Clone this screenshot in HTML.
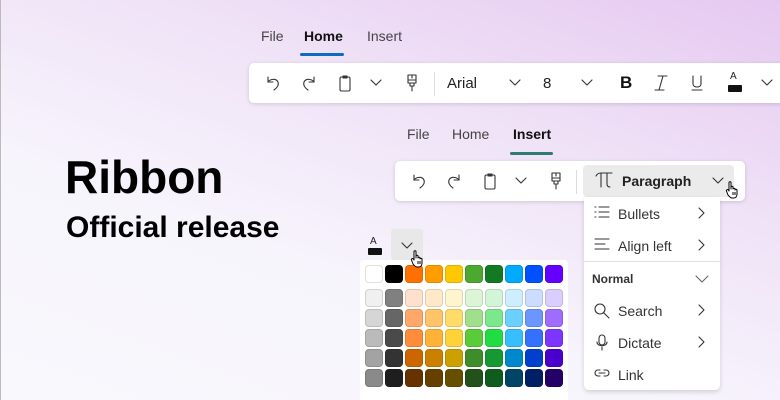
<!DOCTYPE html>
<html><head><meta charset="utf-8"><style>
*{margin:0;padding:0;box-sizing:border-box}
body{width:780px;height:400px;overflow:hidden;font-family:"Liberation Sans",sans-serif;position:relative;
background:linear-gradient(200deg,#e6c9f1 0%,#f0e3f7 35%,#f7f5fc 65%,#f8f8fd 100%);border-left:1px solid #bbb}
.a{position:absolute}
.tab{position:absolute;font-size:14px;color:#444}
.bar{position:absolute;background:#fff;border-radius:5px;box-shadow:0 1px 4px rgba(0,0,0,.15)}
svg{position:absolute;overflow:visible}
.ic{fill:none;stroke:#333;stroke-width:1.1;stroke-linecap:round;stroke-linejoin:round}
.sw{position:absolute;width:18px;height:18px;border-radius:4px;border:1px solid rgba(0,0,0,.12)}
.mi{position:absolute;left:34px;font-size:14px;color:#333}
.cur{fill:#fff;stroke:#000;stroke-width:1;stroke-linejoin:round}
</style></head><body>
<div class="a" style="left:64px;top:150px;font-size:46px;font-weight:bold;color:#000">Ribbon</div>
<div class="a" style="left:65px;top:211px;font-size:30px;font-weight:bold;color:#000">Official release</div>

<div class="tab" style="left:260px;top:28px">File</div>
<div class="tab" style="left:303px;top:28px;font-weight:bold;color:#111">Home</div>
<div class="tab" style="left:366px;top:28px">Insert</div>
<div class="a" style="left:299px;top:53px;width:44px;height:3px;border-radius:2px;background:#0f6cbd"></div>

<div class="bar" style="left:248px;top:63px;width:560px;height:40px">
<svg class="ic" style="left:15px;top:11px" width="18" height="18" viewBox="0 0 18 18"><path d="M4 3v5h5"/><path d="M4 8c2-3 8-4 10 0 1 3-1 6-4 8"/></svg>
<svg class="ic" style="left:51px;top:11px" width="18" height="18" viewBox="0 0 18 18"><path d="M14 3v5H9"/><path d="M14 8c-2-3-8-4-10 0-1 3 1 6 4 8"/></svg>
<svg class="ic" style="left:89px;top:11px" width="14" height="18" viewBox="0 0 14 18"><rect x="2" y="3" width="10" height="14" rx="1.5"/><path d="M5 2h4v2H5z"/></svg>
<svg class="ic" style="left:121px;top:16px" width="12" height="8" viewBox="0 0 12 8"><path d="M1 1l5 5 5-5"/></svg>
<svg class="ic" style="left:157px;top:10px" width="12" height="20" viewBox="0 0 12 20"><path d="M2 2h8v8H2zM2 7h8M6 2v3M4 10v3h4v-3M6 13v5"/></svg>
<div class="a" style="left:185px;top:9px;width:1px;height:24px;background:#ddd"></div>
<div class="a" style="left:198px;top:12px;font-size:15px;color:#222">Arial</div>
<svg class="ic" style="left:260px;top:16px" width="12" height="8" viewBox="0 0 12 8"><path d="M1 1l5 5 5-5"/></svg>
<div class="a" style="left:294px;top:12px;font-size:15px;color:#222">8</div>
<svg class="ic" style="left:332px;top:16px" width="12" height="8" viewBox="0 0 12 8"><path d="M1 1l5 5 5-5"/></svg>
<div class="a" style="left:371px;top:10px;font-size:17px;font-weight:bold;color:#111">B</div>
<svg class="ic" style="left:405px;top:12px" width="14" height="16" viewBox="0 0 14 16"><path d="M4 1h9M1 15h9M9 1L5 15"/></svg>
<svg class="ic" style="left:443px;top:12px" width="10" height="16" viewBox="0 0 10 16"><path d="M1 1v8c0 4 8 4 8 0V1M0 15h10"/></svg>
<div class="a" style="left:481px;top:8px;font-size:10px;color:#222">A</div>
<div class="a" style="left:479px;top:22px;width:14px;height:7px;background:#111;border-radius:1px"></div>
<svg class="ic" style="left:512px;top:16px" width="12" height="8" viewBox="0 0 12 8"><path d="M1 1l5 5 5-5"/></svg>
</div>

<div class="tab" style="left:406px;top:126px">File</div>
<div class="tab" style="left:451px;top:126px">Home</div>
<div class="tab" style="left:512px;top:126px;font-weight:bold;color:#111">Insert</div>
<div class="a" style="left:509px;top:152px;width:43px;height:3px;border-radius:2px;background:#2e7d6f"></div>

<div class="bar" style="left:394px;top:161px;width:350px;height:40px">
<svg class="ic" style="left:15px;top:11px" width="18" height="18" viewBox="0 0 18 18"><path d="M4 3v5h5"/><path d="M4 8c2-3 8-4 10 0 1 3-1 6-4 8"/></svg>
<svg class="ic" style="left:50px;top:11px" width="18" height="18" viewBox="0 0 18 18"><path d="M14 3v5H9"/><path d="M14 8c-2-3-8-4-10 0-1 3 1 6 4 8"/></svg>
<svg class="ic" style="left:88px;top:11px" width="14" height="18" viewBox="0 0 14 18"><rect x="2" y="3" width="10" height="14" rx="1.5"/><path d="M5 2h4v2H5z"/></svg>
<svg class="ic" style="left:120px;top:16px" width="12" height="8" viewBox="0 0 12 8"><path d="M1 1l5 5 5-5"/></svg>
<svg class="ic" style="left:155px;top:10px" width="12" height="20" viewBox="0 0 12 20"><path d="M2 2h8v8H2zM2 7h8M6 2v3M4 10v3h4v-3M6 13v5"/></svg>
<div class="a" style="left:181px;top:9px;width:1px;height:24px;background:#ddd"></div>
<div class="a" style="left:188px;top:4px;width:151px;height:32px;background:#ebebeb;border-radius:4px">
<svg class="ic" style="left:12px;top:7px" width="18" height="16" viewBox="0 0 18 16"><path d="M1 4c1-2 3-3 5-3h11M6 1v14M12 1v11c0 2 1 3 3 3"/></svg>
<div class="a" style="left:39px;top:8px;font-size:14px;font-weight:bold;color:#222">Paragraph</div>
<svg class="ic" style="left:129px;top:12px" width="12" height="8" viewBox="0 0 12 8"><path d="M1 1l5 5 5-5"/></svg>
</div>
</div>
<svg class="cur" style="left:725px;top:181px" width="14" height="18" viewBox="0 0 14 18"><path d="M3 1.5c0-1 2-1 2 0V8V6c0-1 2-1 2 0v2c0-1 2-1 2 0v1c0-1 2-1 2 0v4c0 2-1 4-3 4H6c-2 0-3-2-4-3L0.5 10c-.5-1 1-2 2-1L3 10z"/><path d="M7 11v3M9 11v3" /></svg>

<div class="a" style="left:583px;top:197px;width:136px;height:193px;background:#fff;border-radius:0 0 5px 5px;box-shadow:0 2px 5px rgba(0,0,0,.15)">
<svg class="ic" style="left:10px;top:9px" width="16" height="13" viewBox="0 0 16 13"><path d="M1 1h1M1 6h1M1 11h1M5 1h10M5 6h10M5 11h10"/></svg>
<div class="mi" style="top:9px">Bullets</div>
<svg class="ic" style="left:114px;top:10px" width="7" height="12" viewBox="0 0 7 12"><path d="M1 1l5 5-5 5"/></svg>
<svg class="ic" style="left:10px;top:41px" width="16" height="13" viewBox="0 0 16 13"><path d="M1 1h14M1 6h10M1 11h14"/></svg>
<div class="mi" style="top:41px">Align left</div>
<svg class="ic" style="left:114px;top:42px" width="7" height="12" viewBox="0 0 7 12"><path d="M1 1l5 5-5 5"/></svg>
<div class="a" style="left:0;top:64px;width:136px;height:1px;background:#ddd"></div>
<div class="a" style="left:8px;top:75px;font-size:12px;font-weight:bold;color:#333">Normal</div>
<svg class="ic" style="left:111px;top:78px" width="14" height="8" viewBox="0 0 14 8"><path d="M1 1l6 6 6-6" stroke="#666"/></svg>
<svg class="ic" style="left:10px;top:106px" width="16" height="16" viewBox="0 0 16 16"><circle cx="6" cy="6" r="5"/><path d="M10 10l5 5"/></svg>
<div class="mi" style="top:106px">Search</div>
<svg class="ic" style="left:114px;top:107px" width="7" height="12" viewBox="0 0 7 12"><path d="M1 1l5 5-5 5"/></svg>
<svg class="ic" style="left:12px;top:137px" width="12" height="17" viewBox="0 0 12 17"><rect x="3" y="1" width="6" height="10" rx="3"/><path d="M1 8c0 5 10 5 10 0M6 13v3"/></svg>
<div class="mi" style="top:138px">Dictate</div>
<svg class="ic" style="left:114px;top:139px" width="7" height="12" viewBox="0 0 7 12"><path d="M1 1l5 5-5 5"/></svg>
<svg class="ic" style="left:10px;top:172px" width="16" height="8" viewBox="0 0 16 8"><path d="M6 1H4a3 3 0 000 6h2M10 1h2a3 3 0 010 6h-2M5 4h6"/></svg>
<div class="mi" style="top:170px">Link</div>
</div>

<div class="a" style="left:369px;top:236px;font-size:10px;color:#222">A</div>
<div class="a" style="left:367px;top:248px;width:14px;height:7px;background:#111;border-radius:1px"></div>
<div class="a" style="left:390px;top:229px;width:32px;height:31px;background:#e8e8e8;border-radius:3px"></div>
<svg class="ic" style="left:400px;top:242px" width="12" height="8" viewBox="0 0 12 8"><path d="M1 1l5 5 5-5"/></svg>

<div id="pal" class="a" style="left:359px;top:260px;width:208px;height:140px;background:#fff;border-radius:4px 4px 0 0"></div>
<svg class="cur" style="left:410px;top:250px" width="14" height="18" viewBox="0 0 14 18"><path d="M3 1.5c0-1 2-1 2 0V8V6c0-1 2-1 2 0v2c0-1 2-1 2 0v1c0-1 2-1 2 0v4c0 2-1 4-3 4H6c-2 0-3-2-4-3L0.5 10c-.5-1 1-2 2-1L3 10z"/><path d="M7 11v3M9 11v3"/></svg>
<script>
var rows=[
["#fff","#000","#ff7000","#ff9c00","#ffc800","#4ca82e","#127a23","#00aaff","#0050ff","#6400ff"],
["#f0f0f0","#808080","#ffe0cc","#ffe9c8","#fff4cc","#dcf5d7","#d2f5d8","#cdeeff","#ccdcff","#dccdff"],
["#d6d6d6","#666","#ffa86a","#ffc468","#ffdc6a","#a0e08c","#7ce88c","#6cd0ff","#6c96ff","#a06cff"],
["#bbb","#4a4a4a","#ff8c3a","#ffb238","#ffd23a","#5ccb3a","#22dc44","#36beff","#3670ff","#7c36ff"],
["#a3a3a3","#333","#cc6600","#cc8000","#cca000","#3f8c2a","#169932","#0088cc","#0040cc","#4a00cc"],
["#8a8a8a","#1e1e1e","#663300","#664000","#665000","#22521a","#0e5c1e","#004466","#002066","#250066"]];
var p=document.getElementById('pal'),h='';
rows.forEach(function(r,i){var y=i==0?5:29+(i-1)*20;r.forEach(function(c,j){h+='<div class="sw" style="left:'+(5+j*20)+'px;top:'+y+'px;background:'+c+'"></div>';});});
p.innerHTML=h;
</script>
</body></html>
